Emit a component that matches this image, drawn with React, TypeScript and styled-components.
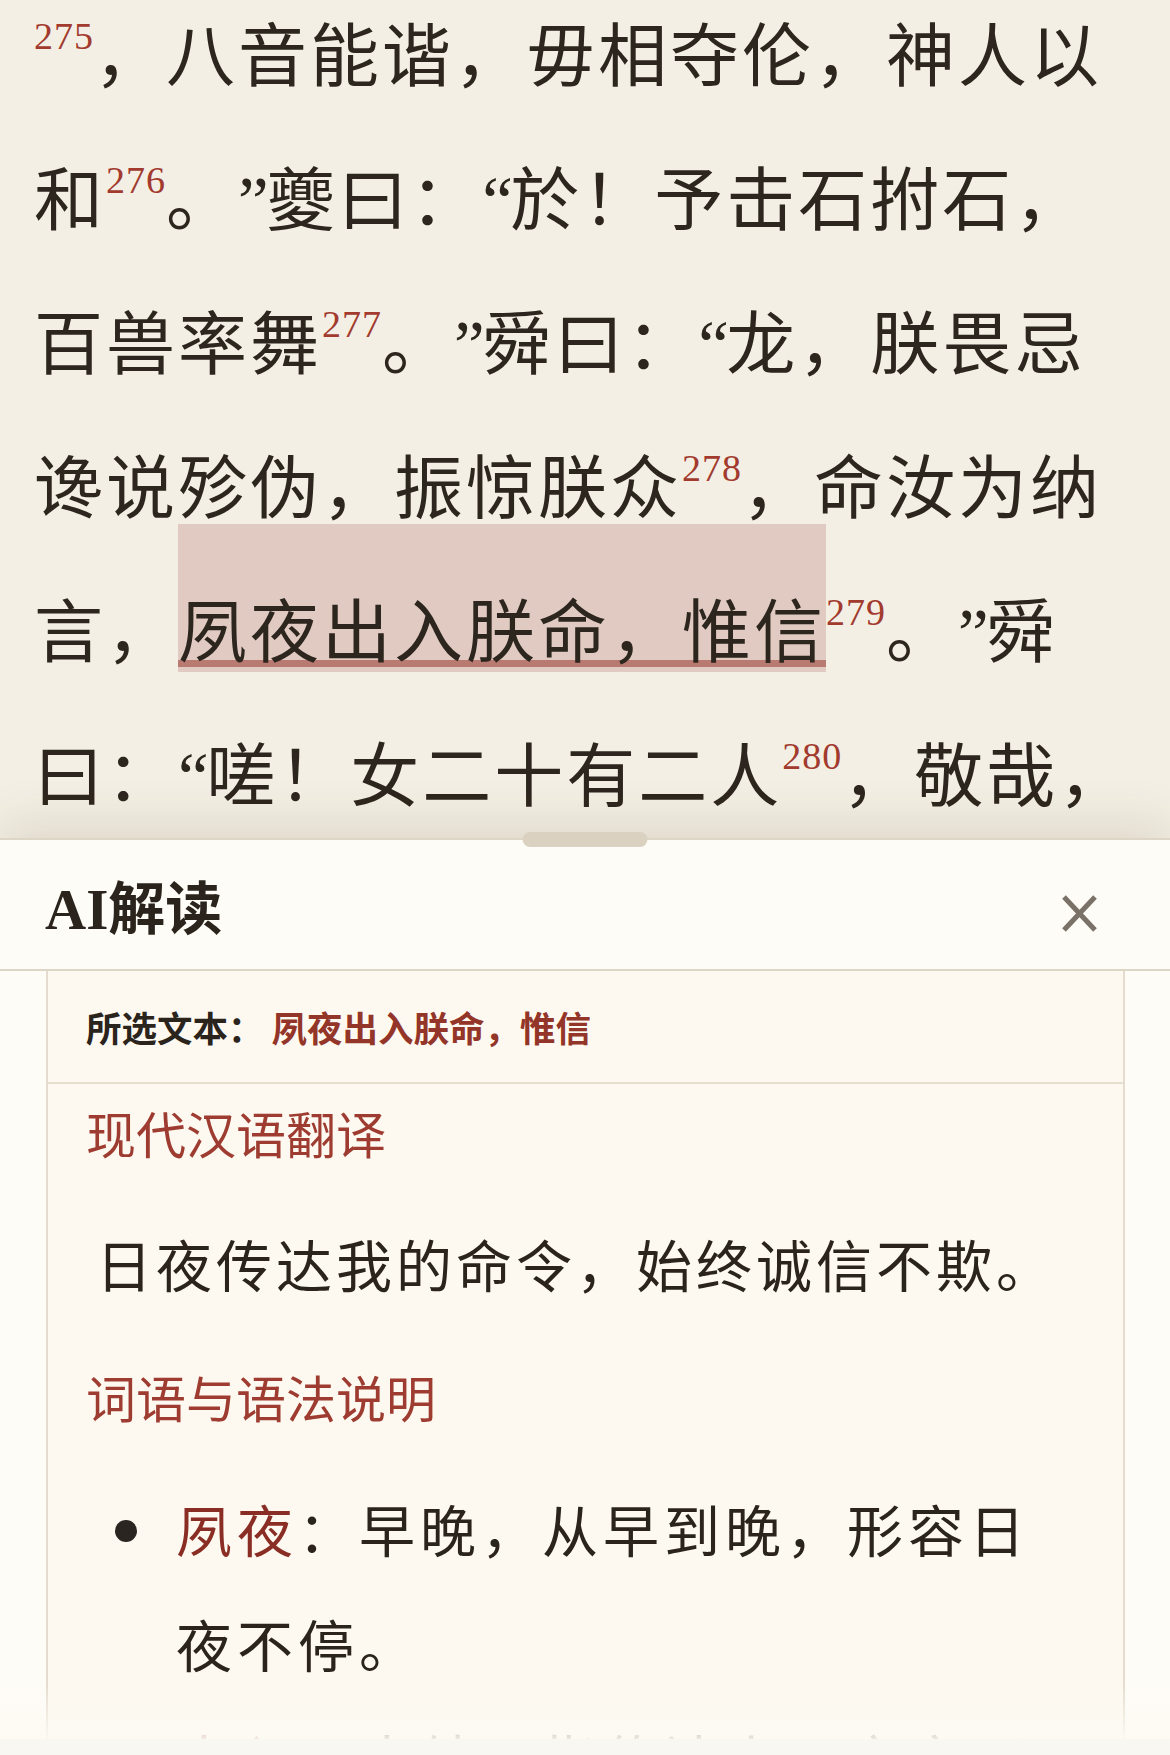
import React from "react";
import styled, { createGlobalStyle } from "styled-components";

const GlobalStyle = createGlobalStyle`
  html, body {
    margin: 0;
    padding: 0;
    background: #f3efe4;
    text-spacing-trim: space-all;
  }
  * { box-sizing: border-box; }
`;

const Page = styled.div`
  position: relative;
  width: 1170px;
  height: 1755px;
  overflow: hidden;
  background: #f3efe4;
`;

const Article = styled.p`
  margin: -14px 0 0 0;
  padding: 0 28px 0 34px;
  font-family: "Liberation Serif", "Noto Sans CJK SC", serif;
  font-size: 69px;
  line-height: 144px;
  letter-spacing: 3px;
  color: #2d261e;
  text-spacing-trim: space-all;
`;

const Quote = styled.span`
  letter-spacing: -2.5px;
`;

const Note = styled.sup`
  font-family: "Liberation Serif", serif;
  font-size: 38px;
  line-height: 0;
  letter-spacing: 1px;
  vertical-align: 32px;
  color: #a23a2e;
`;

const Highlight = styled.span`
  background: #e0cac1;
  padding-top: 72px;
  text-decoration: underline;
  text-decoration-color: #b97a72;
  text-decoration-thickness: 7px;
  text-underline-offset: 3px;
`;

const Sheet = styled.section`
  position: absolute;
  left: 0;
  right: 0;
  top: 838px;
  bottom: 0;
  background: #fefcf7;
  border-top: 2px solid #ddd5c6;
  box-shadow: 0 -14px 44px rgba(90, 70, 40, 0.13);
`;

const Handle = styled.div`
  position: absolute;
  top: -8px;
  left: 50%;
  transform: translateX(-50%);
  width: 125px;
  height: 15px;
  border-radius: 8px;
  background: #dbd1c1;
`;

const Header = styled.header`
  display: flex;
  align-items: center;
  justify-content: space-between;
  height: 131px;
  padding: 10px 73px 0 45px;
  border-bottom: 2px solid #ddd6c7;
`;

const Title = styled.h2`
  margin: 0;
  font-family: "Liberation Serif", "Noto Sans CJK SC", serif;
  font-weight: 700;
  font-size: 57px;
  line-height: 1;
  color: #2b241d;
`;

const CloseButton = styled.button`
  display: flex;
  padding: 0;
  margin-top: 7px;
  border: 0;
  background: none;
  cursor: pointer;
`;

const Card = styled.div`
  margin: 0 45px 0 46px;
  border: 2px solid #e4ddcf;
  border-top: 0;
  background: #fdf9f0;
  min-height: 900px;
`;

const SelectedRow = styled.div`
  display: flex;
  align-items: center;
  height: 113px;
  padding: 0 38px;
  border-bottom: 2px solid #e6decf;
  font-family: "Noto Sans CJK SC", sans-serif;
  font-weight: 700;
  font-size: 35.5px;
  line-height: 1;
`;

const SelectedLabel = styled.span`
  color: #2b241d;
`;

const SelectedValue = styled.span`
  margin-left: 8px;
  color: #933528;
`;

const Section = styled.div`
  padding: 0 38px;
  font-family: "Noto Sans CJK SC", sans-serif;
`;

const SectionTitle = styled.h3<{ $gap: number }>`
  margin: ${(p) => p.$gap}px 0 0 0;
  font-weight: 400;
  font-size: 50px;
  line-height: 70px;
  color: #9e3c31;
`;

const Translation = styled.p`
  margin: 56px 0 0 0;
  padding-left: 10px;
  font-size: 56px;
  line-height: 80px;
  letter-spacing: 4px;
  color: #2b241d;
`;

const List = styled.ul`
  list-style: none;
  margin: 39px 0 0 0;
  padding: 0 20px 0 29px;
`;

const Item = styled.li`
  display: flex;
  align-items: flex-start;
`;

const Bullet = styled.span`
  flex: none;
  width: 22px;
  height: 22px;
  margin-top: 50px;
  border-radius: 50%;
  background: #2a2520;
`;

const ItemText = styled.div`
  margin-left: 39px;
  font-size: 56px;
  line-height: 115px;
  letter-spacing: 5px;
  color: #2b241d;
`;

const Term = styled.span`
  color: #8a2d24;
`;

const Fade = styled.div`
  position: absolute;
  left: 0;
  right: 0;
  bottom: 16px;
  height: 55px;
  background: linear-gradient(
    to bottom,
    rgba(253, 250, 243, 0),
    rgba(253, 250, 243, 0.92)
  );
`;

const BottomBar = styled.div`
  position: absolute;
  left: 0;
  right: 0;
  bottom: 0;
  height: 16px;
  background: #f8f7f2;
`;

const CloseIcon = () => (
  <svg width="35" height="37" viewBox="0 0 35 37" fill="none">
    <path d="M2 2 L33 35 M33 2 L2 35" stroke="#7a7168" strokeWidth="5" />
  </svg>
);

const L = () => <Quote>“</Quote>;
const R = () => <Quote>”</Quote>;

export default function App() {
  return (
    <>
      <GlobalStyle />
      <Page>
        <Article>
          <Note>275</Note>，八音能谐，毋相夺伦，神人以和<Note>276</Note>。<R />夔曰：<L />於！予击石拊石，百兽率舞
          <Note>277</Note>。<R />舜曰：<L />龙，朕畏忌谗说殄伪，振惊朕众<Note>278</Note>，命汝为纳言，
          <Highlight>夙夜出入朕命，惟信</Highlight>
          <Note>279</Note>。<R />舜曰：<L />嗟！女二十有二人<Note>280</Note>，敬哉，惟时亮天功。<R />三载考绩，三考，黜陟幽明，庶绩咸熙。
        </Article>

        <Sheet>
          <Handle />
          <Header>
            <Title>AI解读</Title>
            <CloseButton aria-label="关闭">
              <CloseIcon />
            </CloseButton>
          </Header>
          <Card>
            <SelectedRow>
              <SelectedLabel>所选文本：</SelectedLabel>
              <SelectedValue>夙夜出入朕命，惟信</SelectedValue>
            </SelectedRow>
            <Section>
              <SectionTitle $gap={13}>现代汉语翻译</SectionTitle>
              <Translation>日夜传达我的命令，始终诚信不欺。</Translation>
              <SectionTitle $gap={58}>词语与语法说明</SectionTitle>
              <List>
                <Item>
                  <Bullet />
                  <ItemText>
                    <Term>夙夜</Term>：早晚，从早到晚，形容日夜不停。
                  </ItemText>
                </Item>
                <Item>
                  <Bullet />
                  <ItemText>
                    <Term>出入</Term>：出纳，指传达上下之言，转达王命与下情。
                  </ItemText>
                </Item>
              </List>
            </Section>
          </Card>
        </Sheet>
        <Fade />
        <BottomBar />
      </Page>
    </>
  );
}
